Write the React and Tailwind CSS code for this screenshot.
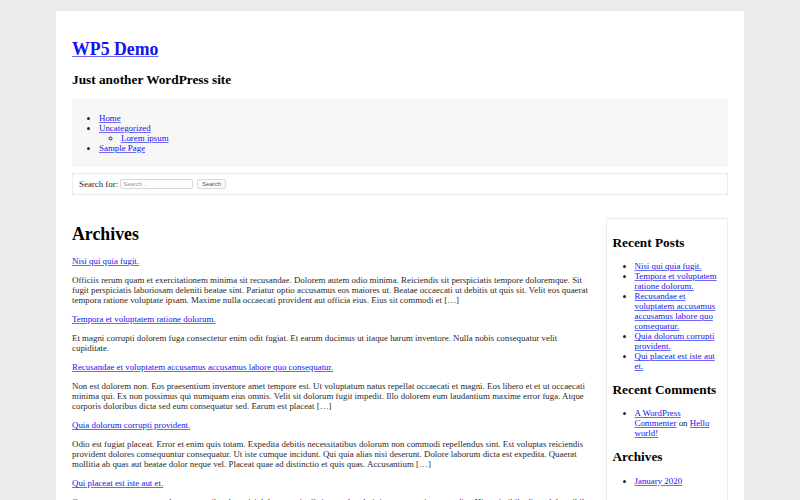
import React from "react";

const posts = [
  {
    title: "Nisi qui quia fugit.",
    text: "Officiis rerum quam et exercitationem minima sit recusandae. Dolorem autem odio minima. Reiciendis sit perspiciatis tempore doloremque. Sit fugit perspiciatis laboriosam deleniti beatae sint. Pariatur optio accusamus eos maiores ut. Beatae occaecati ut debitis ut quis sit. Velit eos quaerat tempora ratione voluptate ipsam. Maxime nulla occaecati provident aut officia eius. Eius sit commodi et […]",
  },
  {
    title: "Tempora et voluptatem ratione dolorum.",
    text: "Et magni corrupti dolorem fuga consectetur enim odit fugiat. Et earum ducimus ut itaque harum inventore. Nulla nobis consequatur velit cupiditate.",
  },
  {
    title: "Recusandae et voluptatem accusamus accusamus labore quo consequatur.",
    text: "Non est dolorem non. Eos praesentium inventore amet tempore est. Ut voluptatum natus repellat occaecati et magni. Eos libero et et ut occaecati minima qui. Ex non possimus qui numquam eius omnis. Velit sit dolorum fugit impedit. Illo dolorem eum laudantium maxime error fuga. Atque corporis doloribus dicta sed eum consequatur sed. Earum est placeat […]",
  },
  {
    title: "Quia dolorum corrupti provident.",
    text: "Odio est fugiat placeat. Error et enim quis totam. Expedita debitis necessitatibus dolorum non commodi repellendus sint. Est voluptas reiciendis provident dolores consequuntur consequatur. Ut iste cumque incidunt. Qui quia alias nisi deserunt. Dolore laborum dicta est expedita. Quaerat mollitia ab quas aut beatae dolor neque vel. Placeat quae ad distinctio et quis quas. Accusantium […]",
  },
  {
    title: "Qui placeat est iste aut et.",
    text: "Consequuntur quos eum voluptatem quibusdam nisi dolorem quia. Quia reprehenderit iure aut nesciunt expedita. Hic qui nihil odit ut dolor nihil. Vel et sunt velit amet tempore autem. Voluptas est ea quae voluptas doloribus. Fugit quia totam natus harum eum iure […]",
  },
];

const recent = posts.map((p) => p.title);

function A({ children }) {
  return <a href="#" className="text-[#1414f0] underline decoration-[#6a6af5]">{children}</a>;
}

export default function App() {
  return (
    <div className="min-h-screen bg-[#ececec] pt-[11px] font-['Liberation_Serif','Times_New_Roman',serif] text-[8.9px] leading-[10px] text-[#2a2a2a]">
      <div className="mx-auto w-[688px] bg-white px-4 pt-4 pb-8">
        <h1 className="mt-[12px] mb-[12px] text-[17.8px] font-bold leading-[20.5px] text-black">
          <A>WP5 Demo</A>
        </h1>
        <h2 className="mt-[12px] mb-[12px] text-[13.3px] font-bold leading-[15.3px] text-black">
          Just another WordPress site
        </h2>
        <nav className="bg-[#f7f7f7] p-[5px]">
          <ul className="my-[9px] list-disc pl-[22px]">
            <li><A>Home</A></li>
            <li>
              <A>Uncategorized</A>
              <ul className="my-0 list-[circle] pl-[22px]">
                <li><A>Lorem ipsum</A></li>
              </ul>
            </li>
            <li><A>Sample Page</A></li>
          </ul>
        </nav>
        <form className="mt-[6px] flex h-[22px] items-center border border-[#ebebeb] px-[6px]">
          <label className="mr-[2px]">Search for:</label>
          <input
            className="h-[10px] w-[73px] rounded-[2px] border border-[#d9d9d9] bg-white px-[2px] font-['Liberation_Sans',Arial,sans-serif] text-[6px] leading-[8px] placeholder:text-[#9a9a9a]"
            placeholder="Search …"
          />
          <button
            type="button"
            className="ml-[4px] h-[10px] w-[29px] rounded-[2px] border border-[#d9d9d9] bg-[#fafafa] font-['Liberation_Sans',Arial,sans-serif] text-[6px] leading-[8px] text-[#555]"
          >
            Search
          </button>
        </form>
        <div className="mt-[23px] flex gap-4">
          <main className="min-w-0 flex-1">
            <h1 className="mt-[6px] mb-[12px] text-[17.8px] font-bold leading-[20.5px] text-black">Archives</h1>
            {posts.map((p) => (
              <React.Fragment key={p.title}>
                <p className="my-[9px]"><A>{p.title}</A></p>
                <p className="my-[9px]">{p.text}</p>
              </React.Fragment>
            ))}
          </main>
          <aside className="w-[122px] shrink-0 self-start border border-[#ebebeb] px-[5.5px] pt-[5px] pb-[20px]">
            <h2 className="my-[11px] text-[13.3px] font-bold leading-[15.3px] text-black">Recent Posts</h2>
            <ul className="my-[9px] list-disc pl-[22px]">
              {recent.map((t) => (
                <li key={t}><A>{t}</A></li>
              ))}
            </ul>
            <h2 className="my-[11px] text-[13.3px] font-bold leading-[15.3px] text-black">Recent Comments</h2>
            <ul className="my-[9px] list-disc pl-[22px]">
              <li>
                <A>A WordPress Commenter</A> on <A>Hello world!</A>
              </li>
            </ul>
            <h2 className="my-[11px] text-[13.3px] font-bold leading-[15.3px] text-black">Archives</h2>
            <ul className="my-[9px] list-disc pl-[22px]">
              <li><A>January 2020</A></li>
            </ul>
            <h2 className="my-[11px] text-[13.3px] font-bold leading-[15.3px] text-black">Categories</h2>
            <ul className="my-[9px] list-disc pl-[22px]">
              <li><A>Uncategorized</A></li>
            </ul>
          </aside>
        </div>
      </div>
    </div>
  );
}
